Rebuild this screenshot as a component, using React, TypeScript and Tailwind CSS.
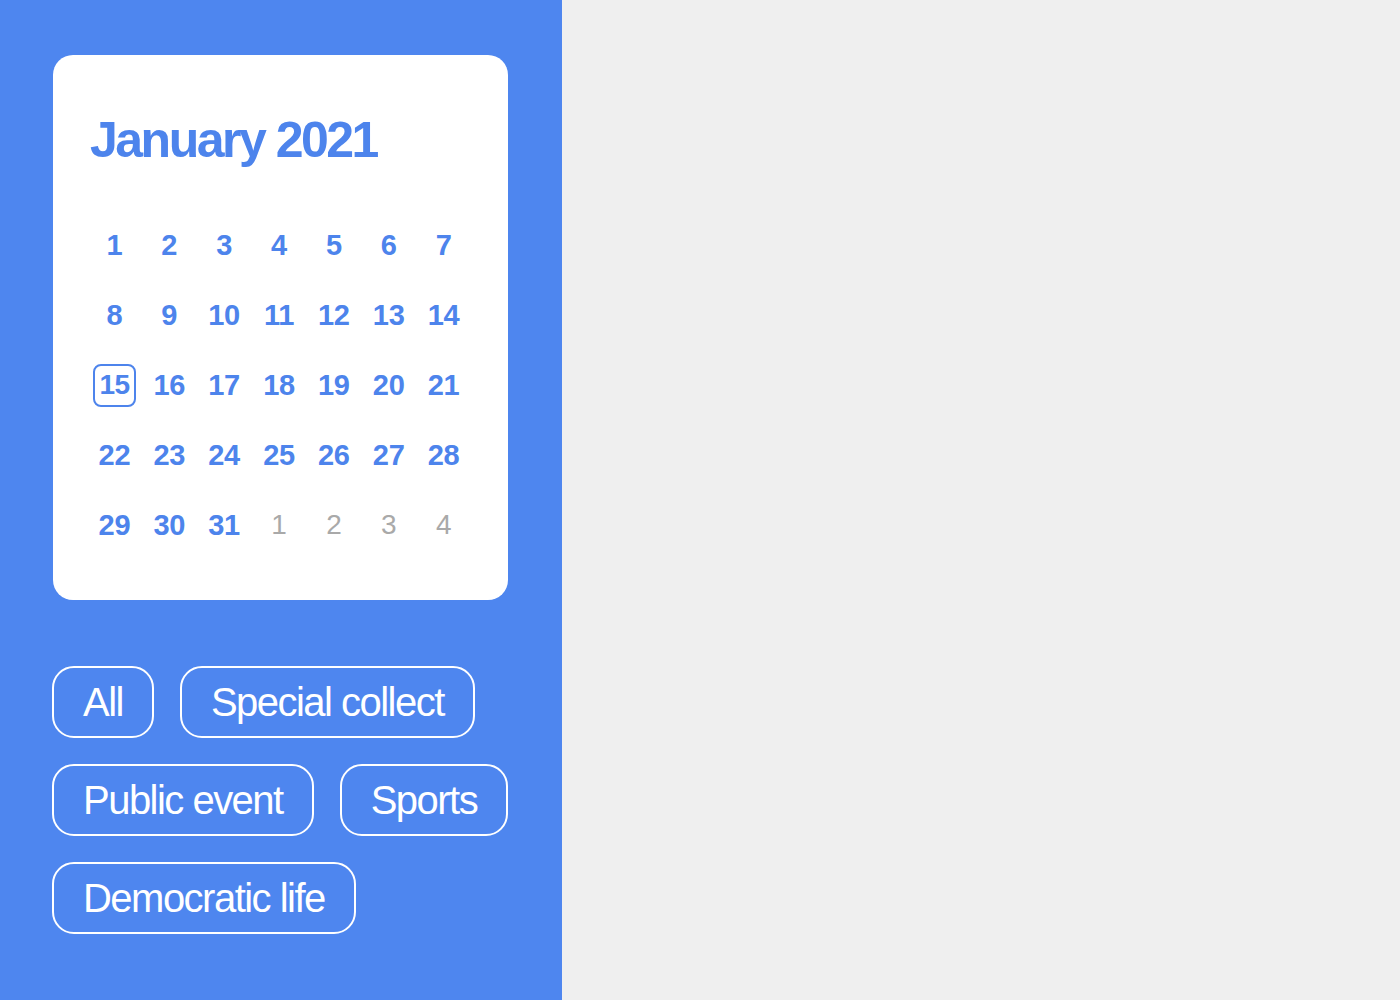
const days: { n: number; muted?: boolean }[] = [
  ...Array.from({ length: 31 }, (_, i) => ({ n: i + 1 })),
  ...[1, 2, 3, 4].map((n) => ({ n, muted: true })),
];

const tagRows = [["All", "Special collect"], ["Public event", "Sports"], ["Democratic life"]];

function Calendar() {
  return (
    <div className="w-[455px] h-[545px] rounded-[20px] bg-white px-[34px] pt-[60px]">
      <h1 className="text-[50px] leading-[50px] font-bold tracking-[-0.05em] text-[#4d84ec] pl-[3px]">
        January 2021
      </h1>
      <div className="mt-[45px] grid w-[384px] grid-cols-7 auto-rows-[70px]">
        {days.map((d, i) => (
          <div key={i} className="flex items-center justify-center">
            {d.n === 15 && !d.muted ? (
              <span className="flex h-[43px] w-[43px] items-center justify-center rounded-[8px] border-2 border-[#4d84ec] text-[28px] leading-none font-bold tracking-[-0.02em] text-[#4d84ec]">
                {d.n}
              </span>
            ) : (
              <span
                className={
                  d.muted
                    ? "text-[28px] leading-none tracking-[-0.01em] text-[#a9a9a9]"
                    : "text-[29px] leading-none font-bold tracking-[-0.01em] text-[#4d84ec]"
                }
              >
                {d.n}
              </span>
            )}
          </div>
        ))}
      </div>
    </div>
  );
}

function Tags() {
  return (
    <div className="mt-[66px] -ml-[1px] flex flex-col gap-[26px]">
      {tagRows.map((row, r) => (
        <div key={r} className="flex gap-[26px]">
          {row.map((t) => (
            <span
              key={t}
              className="flex h-[72px] items-center rounded-[22px] border-2 border-white px-[29px] text-[40px] leading-none tracking-[-0.038em] text-white"
            >
              {t}
            </span>
          ))}
        </div>
      ))}
    </div>
  );
}

export default function App() {
  return (
    <div
      className="flex h-[1000px] w-[1400px] bg-[#efefef]"
      style={{ fontFamily: '"Liberation Sans", Arial, sans-serif' }}
    >
      <aside className="h-full w-[562px] bg-[#4e86ef] pl-[53px] pt-[55px]">
        <Calendar />
        <Tags />
      </aside>
    </div>
  );
}
